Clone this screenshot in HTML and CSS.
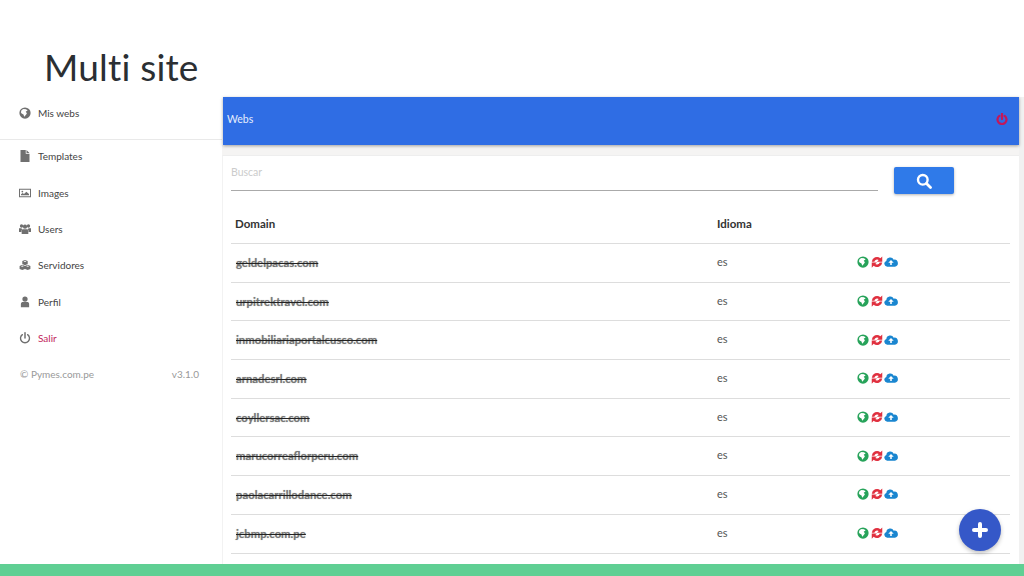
FILE: index.html
```html
<!DOCTYPE HTML>
<html lang="en">
<head>
    <meta charset="UTF-8">
    <title>Multi site</title>
    <link rel="stylesheet" href="styles.css">
</head>

<body>

<svg class="defs" width="0" height="0">
    <symbol id="i-globe" viewBox="0 0 16 16"><path fill-rule="evenodd" d="M8 .5a7.500 7.500 0 1 0 0 15 7.500 7.500 0 0 0 0-15zM3.500 4L6 2.500l3.500.5 2 2-2.500 1 1.500 2.500-1.500 2-2 2.500-1-3-2.500-1.500L2.500 7z"/></symbol>
    <symbol id="i-file" viewBox="0 0 16 16"><path d="M2 0h7v5h5v11H2zM10 0l4 4h-4z"/></symbol>
    <symbol id="i-image" viewBox="0 0 18 16"><path fill-rule="evenodd" d="M0 1.500h18v13H0zM1.500 3v10h15V3z"/><path d="M3 11.500V10l2.500-2 2 1.500 3.500-3.500 4 3.500v2z"/><circle cx="5" cy="5.800" r="1.300"/></symbol>
    <symbol id="i-users" viewBox="0 0 18 16"><circle cx="3.800" cy="3.500" r="2.500"/><circle cx="14.200" cy="3.500" r="2.500"/><circle cx="9" cy="4.500" r="3.200"/><path d="M0 7h3.800l1 3H3.500v2.500H0zM18 7h-3.800l-1 3h1.300v2.500H18zM5 8.500h8l1 2V15.500H4v-5z"/></symbol>
    <symbol id="i-cubes" viewBox="0 0 20 18"><path fill-rule="evenodd" d="M10 .5l4.500 2v5L10 9.500l-4.500-2v-5zM5.500 8.500l4.500 2v5l-4.500 2-4.500-2v-5zM14.500 8.500l4.500 2v5l-4.500 2-4.500-2v-5z"/><path fill="#fff" d="M7.500 3l2.500 1 2.500-1-2.500-1zM3 11l2.500 1 2.500-1-2.500-1zM12 11l2.500 1 2.500-1-2.500-1z"/></symbol>
    <symbol id="i-user" viewBox="0 0 16 16"><circle cx="8" cy="4" r="3.500"/><path d="M2.500 15v-4.500C2.500 8.500 4 8 5 8h6c1 0 2.500.5 2.500 2.500V15z"/></symbol>
    <symbol id="i-power" viewBox="0 0 16 16"><path d="M8 1v7" fill="none" stroke="currentColor" stroke-width="2" stroke-linecap="round"/><path d="M4.500 3.500a6 6 0 1 0 7 0" fill="none" stroke="currentColor" stroke-width="1.800" stroke-linecap="round"/></symbol>
    <symbol id="i-power-bold" viewBox="0 0 16 16"><path d="M8 1v7" fill="none" stroke="currentColor" stroke-width="3" stroke-linecap="round"/><path d="M4.500 3.800a6 6 0 1 0 7 0" fill="none" stroke="currentColor" stroke-width="3" stroke-linecap="round"/></symbol>
    <symbol id="i-sync" viewBox="0 0 16 16"><path d="M1 7.500A7 7 0 0 1 12.500 3L15 .5V7.500H8l2.300-2.300A3.800 3.800 0 0 0 4.500 7.500zM15 8.500A7 7 0 0 1 3.500 13L1 15.500V8.500H8l-2.300 2.300A3.800 3.800 0 0 0 11.500 8.500z"/></symbol>
    <symbol id="i-cloud" viewBox="0 0 18 14"><path fill-rule="evenodd" d="M4 13a3.800 3.800 0 0 1-1-7.400A5 5 0 0 1 12.500 4 4.500 4.500 0 0 1 14 13zM9 4.500L5.500 8H8v3h2V8h2.500z"/></symbol>
</svg>

<h1 class="title">Multi site</h1>

<div class="main">
    <nav class="sidebar">
        <a class="nav-item nav-top"><svg class="nav-icon"><use href="#i-globe"/></svg>Mis webs</a>
        <a class="nav-item"><svg class="nav-icon"><use href="#i-file"/></svg>Templates</a>
        <a class="nav-item"><svg class="nav-icon"><use href="#i-image"/></svg>Images</a>
        <a class="nav-item"><svg class="nav-icon"><use href="#i-users"/></svg>Users</a>
        <a class="nav-item"><svg class="nav-icon"><use href="#i-cubes"/></svg>Servidores</a>
        <a class="nav-item"><svg class="nav-icon"><use href="#i-user"/></svg>Perfil</a>
        <a class="nav-item salir"><svg class="nav-icon"><use href="#i-power"/></svg>Salir</a>
        <div class="nav-foot"><span>&copy; Pymes.com.pe</span><span>v3.1.0</span></div>
    </nav>

    <section class="panel">
        <header class="bar">
            <span>Webs</span>
            <svg class="bar-power"><use href="#i-power-bold"/></svg>
        </header>
        <div class="content">
            <div class="search">
                <div class="search-input">Buscar</div>
                <button class="search-btn">
                    <svg width="16" height="16" viewBox="0 0 16 16"><circle cx="6.800" cy="6.800" r="4.800" fill="none" stroke="#fff" stroke-width="2.400"/><path d="M10.500 10.500L14.500 14.500" stroke="#fff" stroke-width="2.800" stroke-linecap="round"/></svg>
                </button>
            </div>
            <table class="webs">
                <thead>
                    <tr><th class="c-domain">Domain</th><th class="c-lang">Idioma</th><th></th></tr>
                </thead>
                <tbody>
                    <tr><td class="domain">geldelpacas.com</td><td>es</td><td class="acts"><svg class="a-globe"><use href="#i-globe"/></svg><svg class="a-sync"><use href="#i-sync"/></svg><svg class="a-cloud"><use href="#i-cloud"/></svg></td></tr>
                    <tr><td class="domain">urpitrektravel.com</td><td>es</td><td class="acts"><svg class="a-globe"><use href="#i-globe"/></svg><svg class="a-sync"><use href="#i-sync"/></svg><svg class="a-cloud"><use href="#i-cloud"/></svg></td></tr>
                    <tr><td class="domain">inmobiliariaportalcusco.com</td><td>es</td><td class="acts"><svg class="a-globe"><use href="#i-globe"/></svg><svg class="a-sync"><use href="#i-sync"/></svg><svg class="a-cloud"><use href="#i-cloud"/></svg></td></tr>
                    <tr><td class="domain">arnadesrl.com</td><td>es</td><td class="acts"><svg class="a-globe"><use href="#i-globe"/></svg><svg class="a-sync"><use href="#i-sync"/></svg><svg class="a-cloud"><use href="#i-cloud"/></svg></td></tr>
                    <tr><td class="domain">coyllersac.com</td><td>es</td><td class="acts"><svg class="a-globe"><use href="#i-globe"/></svg><svg class="a-sync"><use href="#i-sync"/></svg><svg class="a-cloud"><use href="#i-cloud"/></svg></td></tr>
                    <tr><td class="domain">marucorreaflorperu.com</td><td>es</td><td class="acts"><svg class="a-globe"><use href="#i-globe"/></svg><svg class="a-sync"><use href="#i-sync"/></svg><svg class="a-cloud"><use href="#i-cloud"/></svg></td></tr>
                    <tr><td class="domain">paolacarrillodance.com</td><td>es</td><td class="acts"><svg class="a-globe"><use href="#i-globe"/></svg><svg class="a-sync"><use href="#i-sync"/></svg><svg class="a-cloud"><use href="#i-cloud"/></svg></td></tr>
                    <tr><td class="domain">jcbmp.com.pe</td><td>es</td><td class="acts"><svg class="a-globe"><use href="#i-globe"/></svg><svg class="a-sync"><use href="#i-sync"/></svg><svg class="a-cloud"><use href="#i-cloud"/></svg></td></tr>
                </tbody>
            </table>
        </div>
    </section>
    <div class="scrollbar"></div>

    <button class="fab">
        <svg width="16" height="16" viewBox="0 0 16 16"><path d="M8 2v12M2 8h12" stroke="#fff" stroke-width="4" stroke-linecap="round"/></svg>
    </button>
</div>

<div class="strip"></div>

</body>
</html>
```

FILE: styles.css
```css
* { box-sizing: border-box; }

html, body { margin: 0; height: 576px; overflow: hidden; }
body { display: flex; flex-direction: column; background: #fff; font-family: 'Lato', sans-serif; color: #444; }

.defs { position: absolute; }

.title { margin: 0; height: 97px; padding: 43px 0 0 44px; font-family: 'Lato', sans-serif; font-size: 37px; line-height: 48px; font-weight: 400; color: #2b2f33; letter-spacing: .2px; }

.main { flex: 1; display: flex; position: relative; min-height: 0; }

/* sidebar */
.sidebar { width: 222px; flex: none; font-size: 10px; }
.nav-item { display: flex; align-items: center; height: 36.400px; padding: 0 0 4px 19px; color: #444; }
.nav-top { height: 43px; padding-bottom: 10px; border-bottom: 1px solid #e9e9e9; }
.nav-icon { width: 12px; height: 12px; margin-right: 7px; fill: #707070; color: #707070; flex: none; }
.salir { color: #c2255c; }
.nav-foot { display: flex; justify-content: space-between; padding: 10px 23px 0 20px; color: #999; }

/* panel */
.panel { flex: 1; margin-left: 1px; min-width: 0; display: flex; flex-direction: column; }
.bar { height: 48px; flex: none; display: flex; align-items: center; justify-content: space-between; padding: 0 11px 4px 4px; background: #2f6de4; color: #e6eefc; font-size: 10.500px; box-shadow: 0 1px 3px rgba(0, 0, 0, .35); position: relative; }
.bar-power { width: 12px; height: 12px; color: #c2185b; }

.content { flex: 1; margin: 10px 0 0 -1px; padding: 0 9px 0 8px; border-top: 1px solid #eee; border-left: 1px solid #f2f2f2; box-shadow: 0 -10px 0 #f5f4f3; }

.search { display: flex; align-items: flex-start; height: 62px; padding-top: 11px; }
.search-input { width: 647px; height: 24px; border-bottom: 1px solid #aaa; font-size: 10.500px; color: #ccc; line-height: 10px; }
.search-btn { width: 60px; height: 27px; margin-left: 16px; border: 0; border-radius: 2px; background: #2f7ae9; display: flex; align-items: center; justify-content: center; box-shadow: 0 1px 3px rgba(0, 0, 0, .3); }

/* table */
.webs { width: 100%; border-collapse: collapse; table-layout: fixed; font-size: 11px; }
.webs thead tr { border-bottom: 1px solid #ddd; }
.webs th { text-align: left; height: 25px; padding: 0 0 13px 4px; line-height: 12px; font-weight: 700; font-size: 11.500px; color: #333; }
.webs td { height: 38.700px; padding: 0 0 3px 4px; border-bottom: 1px solid #ddd; color: #555; }
.c-domain { width: 482px; }
.c-lang { width: 140px; }
.webs td.domain { padding: 0 0 1px 5px; font-size: 11.300px; font-weight: 700; color: #777; text-decoration: line-through; text-decoration-color: #222; text-shadow: 0 0 1px rgba(0, 0, 0, .35); }
.webs td.acts { padding-bottom: 1px; white-space: nowrap; font-size: 0; }
.acts svg { width: 12px; height: 12px; margin-right: 1.500px; }
.acts .a-cloud { width: 14px; }
.a-globe { fill: #27a35a; }
.a-sync { fill: #e0303f; }
.a-cloud { fill: #1a86d0; }

.scrollbar { width: 5px; flex: none; background: #f1f1f1; }

.fab { position: absolute; left: 959px; top: 412px; width: 42px; height: 42px; border: 0; border-radius: 50%; background: #3558c8; display: flex; align-items: center; justify-content: center; box-shadow: 0 2px 4px rgba(0, 0, 0, .25); }

.strip { height: 12px; flex: none; background: #5fcf93; }
```
